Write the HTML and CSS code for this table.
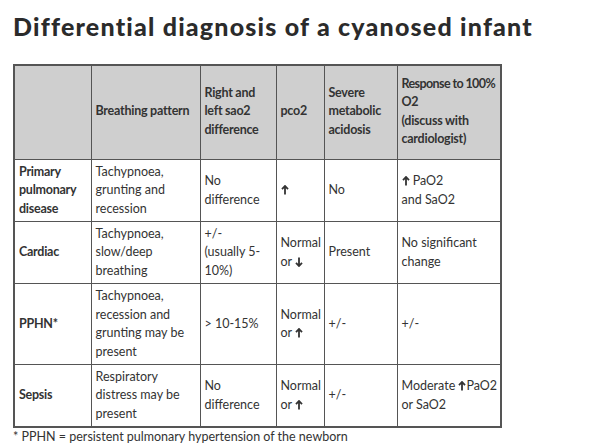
FILE: index.html
```html
<!DOCTYPE html>
<html>
<head>
<meta charset="utf-8">
<link rel="stylesheet" href="styles.css">
</head>
<body>
<h1 class="title">Differential diagnosis of a cyanosed infant</h1>
<table class="dd">
  <colgroup>
    <col class="c1"><col class="c2"><col class="c3"><col class="c4"><col class="c5"><col class="c6">
  </colgroup>
  <thead>
    <tr>
      <th></th>
      <th>Breathing pattern</th>
      <th>Right and left sao2 difference</th>
      <th>pco2</th>
      <th>Severe metabolic acidosis</th>
      <th><span class="nw tight">Response to 100%</span> O2<br>(discuss with cardiologist)</th>
    </tr>
  </thead>
  <tbody>
    <tr class="r3">
      <th>Primary pulmonary disease</th>
      <td>Tachypnoea, grunting and recession</td>
      <td>No difference</td>
      <td><svg class="arr" viewBox="0 0 8 10"><path d="M4 1 L4 9.5 M1 4.2 L4 1 L7 4.2" /></svg></td>
      <td>No</td>
      <td><svg class="arr" viewBox="0 0 8 10"><path d="M4 1 L4 9.5 M1 4.2 L4 1 L7 4.2" /></svg> PaO2<br>and SaO2</td>
    </tr>
    <tr class="r3">
      <th>Cardiac</th>
      <td>Tachypnoea, slow/deep breathing</td>
      <td>+/-<br>(usually 5-10%)</td>
      <td>Normal or <svg class="arr" viewBox="0 0 8 10"><path d="M4 0.5 L4 9 M1 5.8 L4 9 L7 5.8" /></svg></td>
      <td>Present</td>
      <td>No significant change</td>
    </tr>
    <tr class="r4">
      <th>PPHN*</th>
      <td>Tachypnoea, recession and grunting may be present</td>
      <td>&gt; 10-15%</td>
      <td>Normal or <svg class="arr" viewBox="0 0 8 10"><path d="M4 1 L4 9.5 M1 4.2 L4 1 L7 4.2" /></svg></td>
      <td>+/-</td>
      <td>+/-</td>
    </tr>
    <tr class="r3">
      <th>Sepsis</th>
      <td>Respiratory distress may be present</td>
      <td>No difference</td>
      <td>Normal or <svg class="arr" viewBox="0 0 8 10"><path d="M4 1 L4 9.5 M1 4.2 L4 1 L7 4.2" /></svg></td>
      <td>+/-</td>
      <td><span class="nw">Moderate <svg class="arr" viewBox="0 0 8 10"><path d="M4 1 L4 9.5 M1 4.2 L4 1 L7 4.2" /></svg>PaO2</span> or SaO2</td>
    </tr>
  </tbody>
</table>
<p class="note">* PPHN = persistent pulmonary hypertension of the newborn</p>
</body>
</html>
```
FILE: styles.css
```css
html, body {
  margin: 0;
  padding: 0;
  background: #ffffff;
}
body {
  font-family: "Lato", "Liberation Sans", sans-serif;
  color: #333333;
  padding: 0 0 0 13px;
}
.title {
  font-family: "Lato", "Liberation Sans", sans-serif;
  font-weight: 900;
  font-size: 25px;
  line-height: 30px;
  letter-spacing: 1.2px;
  color: #2b2b2b;
  margin: 0;
  padding-top: 11px;
  height: 53px;
  box-sizing: content-box;
}
.dd {
  border-collapse: collapse;
  table-layout: fixed;
  width: 487px;
  font-size: 12.5px;
  line-height: 18.5px;
  border: 2px solid #555;
}
.c1 { width: 77px; }
.c2 { width: 109px; }
.c3 { width: 76px; }
.c4 { width: 48px; }
.c5 { width: 73px; }
.c6 { width: 104px; }
.dd th, .dd td {
  border: 1px solid #555;
  padding: 2px 2px 2px 4px;
  text-align: left;
  vertical-align: middle;
  font-weight: 400;
}
.dd th {
  font-weight: 700;
  font-size: 12.5px;
  letter-spacing: -0.25px;
}
.dd thead th {
  background: #cfcfcf;
  height: 87px;
  padding-bottom: 4px;
}
.tight {
  letter-spacing: -0.6px;
}
.nw {
  white-space: nowrap;
}
.dd tbody tr.r3 td, .dd tbody tr.r3 th {
  height: 57px;
}
.dd tbody tr.r4 td, .dd tbody tr.r4 th {
  height: 76px;
}
.arr {
  width: 8px;
  height: 10px;
  vertical-align: -1px;
  fill: none;
  stroke: #333;
  stroke-width: 1.8;
}
.note {
  margin: 1px 0 0 0;
  font-size: 12.5px;
  line-height: 15px;
  color: #333;
}
```
